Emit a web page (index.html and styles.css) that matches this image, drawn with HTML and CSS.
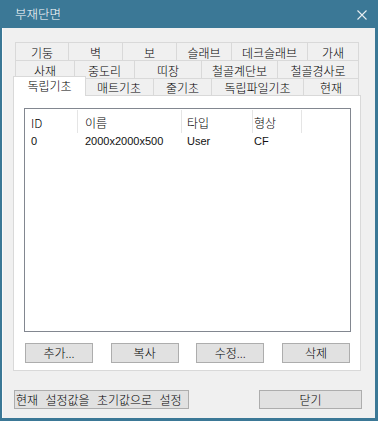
FILE: index.html
```html
<!DOCTYPE html>
<html lang="ko">
<head>
<meta charset="utf-8">
<title>부재단면</title>
<link rel="stylesheet" href="styles.css">
</head>
<body>
<div class="window">
  <div class="titlebar">
    <span class="title">부재단면</span>
    <svg class="close" width="10" height="10" viewBox="0 0 10 10">
      <path d="M0.5 0.5 L9.5 9.5 M9.5 0.5 L0.5 9.5" stroke="#e8eef2" stroke-width="1.1" fill="none"/>
    </svg>
  </div>
  <div class="client">
    <div class="tabstrip">
      <div class="tabrow row1">
        <div class="tab">기둥</div>
        <div class="tab">벽</div>
        <div class="tab">보</div>
        <div class="tab">슬래브</div>
        <div class="tab">데크슬래브</div>
        <div class="tab">가새</div>
      </div>
      <div class="tabrow row2">
        <div class="tab">사재</div>
        <div class="tab">중도리</div>
        <div class="tab">띠장</div>
        <div class="tab">철골계단보</div>
        <div class="tab">철골경사로</div>
      </div>
      <div class="tabrow row3">
        <div class="tab active">독립기초</div>
        <div class="tab">매트기초</div>
        <div class="tab">줄기초</div>
        <div class="tab">독립파일기초</div>
        <div class="tab">현재</div>
      </div>
    </div>
    <div class="panel">
      <div class="listview">
        <div class="lv-header">
          <div class="hcell c1">ID</div>
          <div class="hcell c2">이름</div>
          <div class="hcell c3">타입</div>
          <div class="hcell c4">형상</div>
        </div>
        <div class="lv-row">
          <div class="cell c1">0</div>
          <div class="cell c2">2000x2000x500</div>
          <div class="cell c3">User</div>
          <div class="cell c4">CF</div>
        </div>
      </div>
      <div class="btnrow">
        <button class="btn">추가...</button>
        <button class="btn">복사</button>
        <button class="btn">수정...</button>
        <button class="btn">삭제</button>
      </div>
    </div>
    <div class="footer">
      <button class="btn wide">현재 설정값을 초기값으로 설정</button>
      <button class="btn close-btn">닫기</button>
    </div>
  </div>
</div>
</body>
</html>
```
FILE: styles.css
```css
* { box-sizing: border-box; }

html, body {
  margin: 0;
  padding: 0;
  width: 378px;
  height: 421px;
  overflow: hidden;
  background: #3b7896;
}

body {
  font-family: "Noto Sans CJK KR", "Liberation Sans", sans-serif;
  font-size: 12px;
  font-weight: 300;
  color: #000;
}

.window {
  width: 378px;
  height: 421px;
  background: #3b7896;
  padding: 0 3px 3px 2px;
  display: flex;
  flex-direction: column;
}

.titlebar {
  height: 28px;
  flex: none;
  display: flex;
  align-items: center;
  justify-content: space-between;
  padding: 0 8px 1px 13px;
}

.title {
  color: #ffffff;
  font-size: 12.5px;
  line-height: 14px;
}

.close {
  display: block;
  margin-top: 2px;
}

.client {
  flex: 1;
  background: #f0f0f0;
  padding: 14px 0 0 11px;
  box-shadow: inset 1px 0 0 #fafafa;
}

.tabstrip {
  margin-left: 2px;
  width: 344px;
}

.tabrow {
  display: grid;
  height: 18px;
}

.row1 { grid-template-columns: 53px 54px 54px 55px 76px 52px; }
.row2 { grid-template-columns: 59px 60px 67px 76px 82px; }
.row3 { grid-template-columns: 69px 69px 58px 92px 56px; height: 17px; }

.tab {
  border-top: 1px solid #d9d9d9;
  border-left: 1px solid #d9d9d9;
  background: #f0f0f0;
  display: flex;
  align-items: center;
  justify-content: center;
  line-height: 13px;
  padding-top: 1px;
  white-space: nowrap;
  overflow: hidden;
}

.tab:last-child {
  border-right: 1px solid #d9d9d9;
}

.tab.active {
  position: relative;
  z-index: 2;
  background: #ffffff;
  border: 1px solid #d9d9d9;
  border-bottom: none;
  margin: -2px -2px -1px -2px;
  padding-top: 0;
  padding-bottom: 3px;
}

.panel {
  width: 348px;
  height: 276px;
  background: #ffffff;
  border: 1px solid #d9d9d9;
  padding: 12px 0 0 10px;
}

.listview {
  width: 327px;
  height: 224px;
  border: 1px solid #828790;
  background: #ffffff;
}

.lv-header, .lv-row {
  display: grid;
  grid-template-columns: 53px 104px 71px 49px;
}

.lv-header {
  height: 24px;
  padding-top: 1px;
}

.hcell {
  border-right: 1px solid #e5e5e5;
  padding: 6px 0 0 6px;
  line-height: 14px;
  white-space: nowrap;
}

.lv-row {
  height: 16px;
}

.cell {
  font-family: "Liberation Sans", "Noto Sans CJK KR", sans-serif;
  font-weight: 400;
  font-size: 11px;
  line-height: 16px;
  padding-left: 6px;
  white-space: nowrap;
  color: #111;
}

.c2 { padding-left: 7px; }
.c3 { padding-left: 5px; }
.c4 { padding-left: 1px; }

.btnrow {
  width: 325px;
  margin: 11px 0 0 1px;
  display: flex;
  justify-content: space-between;
}

.btn {
  font-family: "Noto Sans CJK KR", "Liberation Sans", sans-serif;
  font-size: 12px;
  font-weight: 300;
  line-height: 14px;
  color: #000;
  background: #e1e1e1;
  border: 1px solid #adadad;
  border-radius: 0;
  width: 68px;
  height: 20px;
  padding: 0;
  margin: 0;
  white-space: nowrap;
}

.footer {
  width: 349px;
  margin-top: 19px;
  padding-left: 1px;
  display: flex;
  justify-content: space-between;
}

.btn.wide {
  width: 175px;
  height: 19px;
  padding: 0 0 0 1px;
  overflow: visible;
  text-align: left;
  word-spacing: 4px;
}

.btn.close-btn {
  width: 103px;
  height: 19px;
}
```
